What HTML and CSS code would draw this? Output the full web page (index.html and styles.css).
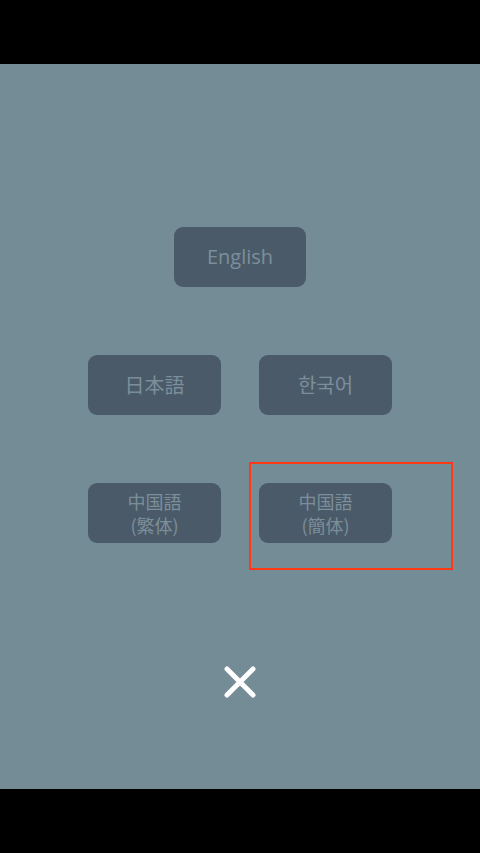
FILE: index.html
```html
<!DOCTYPE html>
<html lang="ja">
<head>
<meta charset="utf-8">
<title>Language</title>
<link rel="stylesheet" href="styles.css">
</head>
<body>
<div class="bar"></div>
<main class="stage">
  <div class="row">
    <button class="lang en">English</button>
  </div>
  <div class="row">
    <button class="lang" lang="ja">日本語</button>
    <button class="lang" lang="ko">한국어</button>
  </div>
  <div class="row">
    <button class="lang two" lang="ja">中国語<br>(繁体)</button>
    <button class="lang two" lang="ja">中国語<br>(簡体)</button>
  </div>
  <button class="close" aria-label="close">
    <svg width="32" height="32" viewBox="0 0 32 32"><path d="M3 3 L29 29 M29 3 L3 29" stroke="#fff" stroke-width="5" stroke-linecap="round" fill="none"/></svg>
  </button>
  <div class="highlight"></div>
</main>
<div class="bar"></div>
</body>
</html>
```
FILE: styles.css
```css
html, body { margin: 0; padding: 0; background: #000; }
body { width: 480px; height: 853px; overflow: hidden; font-family: "Noto Sans CJK JP", "Noto Sans", sans-serif; }
.bar { height: 64px; background: #000; }
.stage {
  position: relative;
  height: 725px;
  background: #748c96;
  display: flex;
  flex-direction: column;
  align-items: center;
  padding-top: 163px;
  box-sizing: border-box;
}
.row { display: flex; gap: 38px; justify-content: center; margin-bottom: 68px; }
.row:nth-child(3) { margin-bottom: 0; }
.lang {
  width: 133px;
  height: 60px;
  border: 0;
  border-radius: 9px;
  background: #4b5a69;
  color: #7b8f9a;
  font-family: "Noto Sans CJK JP", "Noto Sans", sans-serif;
  font-size: 20px;
  padding: 0;
  margin: 0;
  display: flex;
  align-items: center;
  justify-content: center;
  line-height: 24px;
}
.lang[lang="ko"] { font-family: "Noto Sans CJK KR", sans-serif; }
.lang.en { font-family: "Open Sans", "Roboto", sans-serif; font-size: 20px; width: 132px; }
.lang.two { font-size: 18px; line-height: 24px; }
.close {
  margin-top: 123px;
  width: 32px;
  height: 32px;
  padding: 0;
  border: 0;
  background: transparent;
  display: block;
}
.close svg { display: block; }
.highlight {
  position: absolute;
  left: 249px;
  top: 398px;
  width: 204px;
  height: 108px;
  border: 2px solid #ff3a12;
  box-sizing: border-box;
}
```
